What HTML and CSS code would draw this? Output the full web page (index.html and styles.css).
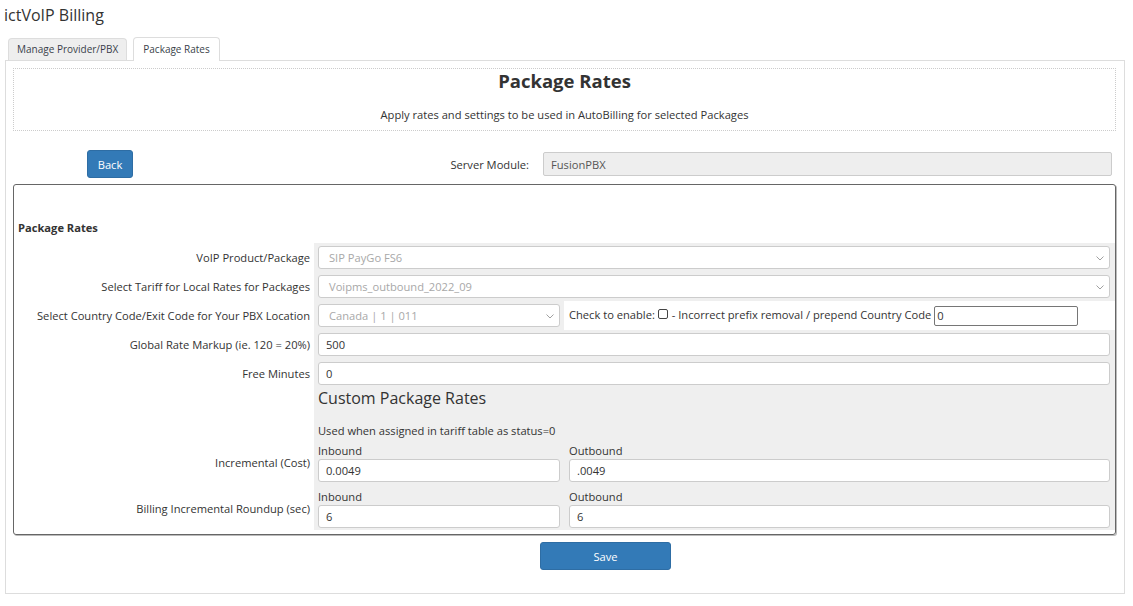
FILE: index.html
```html
<!DOCTYPE html>
<html>
<head>
<meta charset="utf-8">
<title>ictVoIP Billing</title>
<link rel="stylesheet" href="styles.css">
</head>
<body>
<div class="page">
  <div class="app-title">ictVoIP Billing</div>
  <div class="tabs">
    <div class="tab">Manage Provider/PBX</div>
    <div class="tab active">Package Rates</div>
  </div>
  <div class="panel">
    <div class="page-header">
      <h1>Package Rates</h1>
      <p>Apply rates and settings to be used in AutoBilling for selected Packages</p>
    </div>
    <div class="toolbar">
      <div class="toolbar-left"><button class="btn btn-back">Back</button></div>
      <label class="server-label">Server Module:</label>
      <input class="server-input" value="FusionPBX" readonly>
    </div>
    <div class="rates-box">
      <div class="section-title">Package Rates</div>
      <table class="form-table">
        <colgroup><col class="c-label"><col class="c-a"><col class="c-b"></colgroup>
        <tr>
          <td class="lbl">VoIP Product/Package</td>
          <td class="fld fld-wide" colspan="2">
            <div class="select"><span>SIP PayGo FS6</span><svg class="chev" width="8" height="5" viewBox="0 0 8 5"><polyline points="0.5,0.5 4,4 7.5,0.5" fill="none" stroke="#a0a0a0" stroke-width="1"/></svg></div>
          </td>
        </tr>
        <tr>
          <td class="lbl">Select Tariff for Local Rates for Packages</td>
          <td class="fld fld-wide" colspan="2">
            <div class="select"><span>Voipms_outbound_2022_09</span><svg class="chev" width="8" height="5" viewBox="0 0 8 5"><polyline points="0.5,0.5 4,4 7.5,0.5" fill="none" stroke="#a0a0a0" stroke-width="1"/></svg></div>
          </td>
        </tr>
        <tr>
          <td class="lbl">Select Country Code/Exit Code for Your PBX Location</td>
          <td class="fld">
            <div class="select"><span>Canada | 1 | 011</span><svg class="chev" width="8" height="5" viewBox="0 0 8 5"><polyline points="0.5,0.5 4,4 7.5,0.5" fill="none" stroke="#a0a0a0" stroke-width="1"/></svg></div>
          </td>
          <td class="fld-plain">Check to enable:<input type="checkbox" class="check"> - Incorrect prefix removal / prepend Country Code <input class="plain-input" value="0"></td>
        </tr>
        <tr>
          <td class="lbl">Global Rate Markup (ie. 120 = 20%)</td>
          <td class="fld fld-wide" colspan="2"><input class="text-input" value="500"></td>
        </tr>
        <tr>
          <td class="lbl">Free Minutes</td>
          <td class="fld fld-wide" colspan="2"><input class="text-input" value="0"></td>
        </tr>
        <tr>
          <td class="lbl"></td>
          <td class="fld fld-head" colspan="2">
            <div class="custom-title">Custom Package Rates</div>
            <div class="custom-note">Used when assigned in tariff table as status=0</div>
          </td>
        </tr>
        <tr>
          <td class="lbl">Incremental (Cost)</td>
          <td class="fld"><div class="sub-label">Inbound</div><input class="text-input" value="0.0049"></td>
          <td class="fld fld-b"><div class="sub-label">Outbound</div><input class="text-input" value=".0049"></td>
        </tr>
        <tr class="last">
          <td class="lbl">Billing Incremental Roundup (sec)</td>
          <td class="fld"><div class="sub-label">Inbound</div><input class="text-input" value="6"></td>
          <td class="fld fld-b"><div class="sub-label">Outbound</div><input class="text-input" value="6"></td>
        </tr>
      </table>
    </div>
    <div class="actions"><button class="btn btn-save">Save</button></div>
  </div>
</div>
</body>
</html>
```

FILE: styles.css
```css
* { box-sizing: border-box; }

html, body {
  margin: 0;
  padding: 0;
  background: #fff;
}

body {
  font-family: "Open Sans", "Liberation Sans", Arial, sans-serif;
  font-size: 11.15px;
  color: #333;
}

.page {
  padding: 0 8px 0 5px;
}

.app-title {
  font-size: 16px;
  line-height: 20px;
  height: 37px;
  padding: 5px 0 0 0;
  margin-left: -1px;
  color: #333;
}

.tabs {
  display: flex;
  align-items: flex-end;
  gap: 6px;
  padding-left: 3px;
  height: 23px;
}

.tab {
  height: 22px;
  line-height: 21px;
  padding: 0 8px;
  font-size: 10px;
  color: #3a3f4a;
  background: #eee;
  border: 1px solid #ddd;
  border-bottom: none;
  border-radius: 4px 4px 0 0;
}

.tab.active {
  height: 24px;
  line-height: 23px;
  padding: 0 9px;
  background: #fff;
  margin-bottom: -1px;
  position: relative;
  z-index: 1;
}

.panel {
  border: 1px solid #ddd;
  padding: 7px 8px 23px 7px;
}

.page-header {
  border: 1px dotted #ccc;
  text-align: center;
  padding: 0 0 7px 0;
}

.page-header h1 {
  margin: 0;
  font-size: 18.5px;
  line-height: 24px;
  font-weight: 700;
  color: #333;
}

.page-header p {
  margin: 13px 0 0 0;
  line-height: 17px;
}

.toolbar {
  display: grid;
  grid-template-columns: 1fr auto 569px;
  align-items: center;
  margin-top: 19px;
  padding-right: 4px;
}

.toolbar-left {
  padding-left: 74px;
}

.btn {
  font-family: inherit;
  font-size: 11.15px;
  color: #fff;
  background: #337ab7;
  border: 1px solid #2e6da4;
  border-radius: 3px;
  cursor: pointer;
}

.btn-back {
  width: 46px;
  height: 28px;
  padding: 0;
}

.server-label {
  padding-right: 14px;
}

.server-input {
  height: 24px;
  width: 100%;
  font-family: inherit;
  font-size: 11.15px;
  color: #555;
  background: #eee;
  border: 1px solid #ccc;
  border-radius: 2px;
  padding: 0 7px;
}

.rates-box {
  margin-top: 6px;
  border: 1px solid #666;
  border-radius: 3px;
  box-shadow: 1px 1px 0 #bbb;
  padding: 34px 0 4px 0;
}

.section-title {
  font-weight: 700;
  line-height: 17px;
  padding-left: 4px;
  margin-bottom: 7px;
}

.form-table {
  width: 100%;
  table-layout: fixed;
  border-collapse: collapse;
}

.c-label { width: 300px; }
.c-a { width: 250px; }

.form-table td {
  padding: 3px 4px;
  vertical-align: middle;
}

.form-table td.lbl {
  text-align: right;
  padding-right: 4px;
  background: #fff;
}

.form-table td.fld {
  background: #efefef;
}

.form-table td.fld-wide {
  padding-right: 5px;
}

.form-table td.fld-b {
  padding-left: 5px;
  padding-right: 5px;
}

.form-table td.fld-plain {
  background: #fff;
  padding-left: 5px;
  white-space: nowrap;
}

.form-table td.fld-head {
  padding-top: 0;
  padding-bottom: 0;
}

.form-table tr.last td {
  padding-bottom: 2px;
}

.select {
  position: relative;
  height: 23px;
  line-height: 21px;
  border: 1px solid #ccc;
  border-radius: 3px;
  background: #fff;
  color: #a8a8a8;
  padding: 0 10px;
}

.chev {
  position: absolute;
  right: 5px;
  top: 9px;
}

.text-input {
  display: block;
  width: 100%;
  height: 23px;
  font-family: inherit;
  font-size: 11.15px;
  color: #333;
  background: #fff;
  border: 1px solid #ccc;
  border-radius: 3px;
  padding: 0 7px;
}

.check {
  appearance: none;
  -webkit-appearance: none;
  width: 10px;
  height: 10px;
  border: 1px solid #444;
  border-radius: 2px;
  margin: 0 1px 0 3px;
  vertical-align: -1px;
  background: #fff;
}

.plain-input {
  width: 144px;
  height: 20px;
  font-family: inherit;
  font-size: 11.15px;
  color: #333;
  border: 1px solid #767676;
  border-radius: 2px;
  padding: 0 2px;
  vertical-align: middle;
  margin: 0;
}

.custom-title {
  font-size: 16px;
  line-height: 20px;
  color: #333;
}

.custom-note {
  margin-top: 14px;
  line-height: 17px;
}

.sub-label {
  line-height: 17px;
}

.actions {
  margin-top: 7px;
  padding-left: 527px;
}

.btn-save {
  width: 131px;
  height: 28px;
}
```
